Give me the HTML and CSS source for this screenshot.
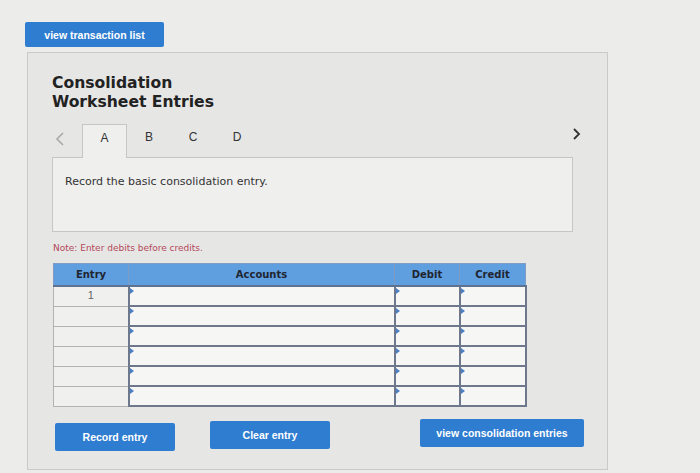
FILE: index.html
```html
<!DOCTYPE html>
<html>
<head>
<meta charset="utf-8">
<link rel="stylesheet" href="styles.css">
</head>
<body>
<div class="top">
  <button class="btn btn-list">view transaction list</button>
</div>
<div class="panel">
  <h1 class="title">Consolidation<br>Worksheet Entries</h1>
  <div class="tabs">
    <span class="arrow arrow-left">
      <svg width="10" height="16" viewBox="0 0 10 16"><path d="M8 2 L2 8 L8 14" fill="none" stroke="#a9a9a9" stroke-width="1.6"/></svg>
    </span>
    <span class="tab active">A</span>
    <span class="tab">B</span>
    <span class="tab">C</span>
    <span class="tab">D</span>
    <span class="spacer"></span>
    <span class="arrow arrow-right">
      <svg width="10" height="14" viewBox="0 0 10 14"><path d="M2 2 L7 7 L2 12" fill="none" stroke="#333" stroke-width="1.8"/></svg>
    </span>
  </div>
  <div class="question">Record the basic consolidation entry.</div>
  <p class="note">Note: Enter debits before credits.</p>
  <table class="grid">
    <colgroup>
      <col class="w-entry"><col class="w-acc"><col class="w-debit"><col class="w-credit">
    </colgroup>
    <thead>
      <tr>
        <th>Entry</th>
        <th>Accounts</th>
        <th>Debit</th>
        <th>Credit</th>
      </tr>
    </thead>
    <tbody>
      <tr><td class="entry">1</td><td class="in"></td><td class="in"></td><td class="in"></td></tr>
      <tr><td class="entry"></td><td class="in"></td><td class="in"></td><td class="in"></td></tr>
      <tr><td class="entry"></td><td class="in"></td><td class="in"></td><td class="in"></td></tr>
      <tr><td class="entry"></td><td class="in"></td><td class="in"></td><td class="in"></td></tr>
      <tr><td class="entry"></td><td class="in"></td><td class="in"></td><td class="in"></td></tr>
      <tr><td class="entry"></td><td class="in"></td><td class="in"></td><td class="in"></td></tr>
    </tbody>
  </table>
  <div class="actions">
    <button class="btn btn-record">Record entry</button>
    <button class="btn btn-clear">Clear entry</button>
    <button class="btn btn-view">view consolidation entries</button>
  </div>
</div>
</body>
</html>
```
FILE: styles.css
```css
html, body {
  margin: 0;
  padding: 0;
  background: #ececeb;
  height: 100%;
  overflow: hidden;
}
body {
  font-family: "DejaVu Sans", Verdana, sans-serif;
  color: #222;
}
.btn {
  display: flex;
  align-items: center;
  justify-content: center;
  background: #2e7dd0;
  color: #fff;
  border: none;
  border-radius: 2px;
  font-family: "Liberation Sans", Arial, sans-serif;
  font-weight: bold;
  font-size: 10.5px;
  padding: 0;
  cursor: pointer;
}
.top {
  padding: 22px 0 0 25px;
  height: 25px;
}
.btn-list {
  width: 139px;
  height: 25px;
}
.panel {
  margin: 5px 0 0 27px;
  width: 555px;
  height: 416px;
  border: 1px solid #cacaca;
  background: #e6e6e5;
  padding: 0 0 0 24px;
}
.title {
  margin: 21px 0 0 0;
  font-size: 15.6px;
  line-height: 19px;
  font-weight: bold;
  color: #222;
}
.tabs {
  display: flex;
  align-items: flex-start;
  height: 33px;
  margin-top: 12px;
  width: 530px;
}
.arrow {
  display: flex;
}
.arrow-left {
  margin: 7px 0 0 3px;
  width: 27px;
}
.arrow-right {
  margin-top: 3px;
}
.spacer { flex: 1; }
.tab {
  width: 44px;
  height: 27px;
  padding-top: 6px;
  text-align: center;
  font-family: "Liberation Sans", Arial, sans-serif;
  font-size: 12px;
  color: #333;
  box-sizing: content-box;
}
.tab.active {
  width: 43px;
  background: #efefee;
  border: 1px solid #c6c6c6;
  border-bottom: none;
  position: relative;
  z-index: 1;
}
.question {
  width: 507px;
  height: 56px;
  border: 1px solid #c6c6c6;
  background: #efefee;
  padding: 17px 0 0 12px;
  font-size: 11px;
  color: #333;
}
.note {
  margin: 11px 0 0 1px;
  font-size: 9px;
  color: #b5485a;
  height: 16px;
}
.grid {
  margin: 4px 0 0 1px;
  border-collapse: collapse;
  table-layout: fixed;
  width: 472px;
}
.w-entry { width: 75px; }
.w-acc { width: 266px; }
.w-debit { width: 65px; }
.w-credit { width: 66px; }
.grid th {
  background: #5f9fe0;
  height: 21px;
  padding: 0;
  font-size: 10px;
  font-weight: bold;
  color: #1f2530;
  border: 1px solid #7f9cc4;
  border-bottom: 2px solid #5f7290;
  text-align: center;
}
.grid td {
  height: 18px;
  padding: 0;
}
.grid td.entry {
  background: #f0f0ef;
  border: 1px solid #b3b3b3;
  text-align: center;
  font-family: "Liberation Sans", Arial, sans-serif;
  font-size: 11px;
  color: #666;
  vertical-align: top;
  padding-top: 2px;
  height: 16px;
}
.grid td.in {
  background: #f6f6f5;
  border: 2px solid #6d788c;
  position: relative;
}
.grid td.in::before {
  content: "";
  position: absolute;
  left: 0;
  top: 1px;
  border-top: 3px solid transparent;
  border-bottom: 3px solid transparent;
  border-left: 4px solid #4b7fc4;
}
.actions {
  display: flex;
  align-items: flex-start;
  margin-top: 16px;
  padding-left: 3px;
}
.btn-record {
  width: 120px;
  height: 28px;
}
.btn-clear {
  width: 120px;
  height: 28px;
  margin-left: 35px;
  margin-top: -2px;
}
.btn-view {
  width: 164px;
  height: 28px;
  margin-left: 90px;
  margin-top: -4px;
}
```
